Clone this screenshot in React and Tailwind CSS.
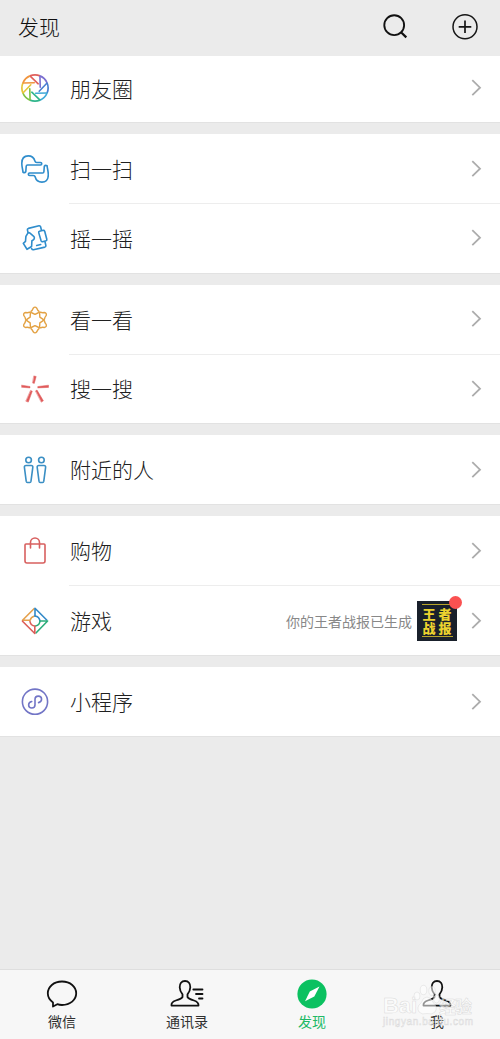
import React from 'react';

const Icon = ({ children, color = 'none' }) => (
  <svg viewBox="0 0 28 28" className="h-7 w-7 shrink-0" fill="none" stroke={color} strokeWidth="1.6" strokeLinejoin="round" strokeLinecap="round">
    {children}
  </svg>
);

const bladeColors = ['#e0605c', '#7b6fd0', '#4a7fd0', '#3fa9d8', '#2fb58c', '#7cc242', '#e5c53a', '#f0953f'];

const Moments = () => (
  <Icon>
    {bladeColors.map((c, i) => (
      <g key={c} stroke={c} transform={`rotate(${i * 45} 14 14)`}>
        <path d="M9 1.9A13 13 0 0 1 19 1.9" strokeLinecap="butt" strokeWidth="1.7" />
        <path d="M9.2 2.2L17.2 9.8" strokeWidth="1.6" />
      </g>
    ))}
  </Icon>
);

const hand = 'M2 17.2C1.8 14.2 .8 12.2 .8 8.3C.8 3.4 3.5 .9 7.2 .9C11 .9 13.1 2.8 14 6.2Q14.2 7.5 15.8 7.5H19.5C21.2 7.5 21.2 10 19.5 10H6.5Q5.3 10 5.2 11.3L4.8 16.8Q3.8 18.2 2 17.2Z';
const Scan = () => (
  <Icon color="#2f8dcc">
    <path d={hand} />
    <path d={hand} transform="rotate(180 14.05 14)" />
  </Icon>
);

const Shake = () => (
  <Icon color="#2f8dcc">
    <path d="M7 8.6L6.4 5.8Q6.3 4.7 7.4 4.4L18 1.8Q19.3 1.6 19.6 2.8L20.4 6M24 17.8L24.9 21.6Q25 22.8 23.9 23.1L12.4 25.8Q11.2 25.9 10.6 24.6" />
    <path d="M18.5 7.2L22.3 6.3Q23.3 6.2 23.7 7.2L25.8 15.3Q26 16.4 25 16.8L21.6 17.7Q20.6 17.8 20.1 16.8L17.7 8.6Q17.5 7.5 18.5 7.2Z" />
    <path d="M7 8.8L4.9 12.4L4.5 17.4L2.3 19.4L6 25.3L10.6 22.5L10.9 16.8Q14.4 15.2 13 12.6L9 9.2Q7.8 8.2 7 8.8Z" />
    <path d="M15.7 21.5L19.7 20.5" />
  </Icon>
);

const Look = () => (
  <Icon color="#e3a244">
    {[0, 60, 120, 180, 240, 300].map((a) => (
      <path key={a} transform={`rotate(${a} 14 14)`} d="M10 5.4Q11.4 4.4 12.2 2.2Q14 0 15.8 2.2Q16.6 4.4 18 5.4Q18.3 6.7 16.8 7L14 8.4L11.2 7Q9.7 6.7 10 5.4Z" strokeWidth="1.4" />
    ))}
  </Icon>
);

const Search = () => (
  <Icon>
    <g fill="#e05c5c" stroke="#e05c5c" strokeWidth=".5">
      <path d="M13.1 1L15.2 1.5L13.3 8.4L11.8 8Z" />
      <path d="M.8 10.2L9 11.5V12.9L.8 12.3Z" />
      <path d="M17 11.5L27.5 10.2V12.4L17 12.9Z" />
      <path d="M9.8 15.6L11.3 16.2L7.3 27.1L5.1 26.3Z" />
      <path d="M14.7 15.8L16 15L22.4 25.8L20.5 27Z" />
    </g>
  </Icon>
);

const Nearby = () => (
  <Icon color="#3b8fc4">
    {[0, 12.8].map((x) => (
      <g key={x} transform={`translate(${x} 0)`}>
        <circle cx="7.6" cy="4" r="2.8" />
        <path d="M5 9.5H10.2Q12 9.5 11.8 11.3L10 25.2Q9.8 26.5 8.8 26.5H6.4Q5.4 26.5 5.2 25.2L3.4 11.3Q3.2 9.5 5 9.5Z" />
      </g>
    ))}
  </Icon>
);

const Shopping = () => (
  <Icon color="#d8605f">
    <path d="M5 7H23Q24 7 24 8V24Q24 26 22 26H6Q4 26 4 24V8Q4 7 5 7Z" />
    <path d="M9.5 11V5.5A4.5 4.5 0 0 1 18.5 5.5V11" />
  </Icon>
);

const Games = () => (
  <Icon>
    <path d="M13 1.7L1.5 13.2H9.2Q9.8 10.2 13 9.2" stroke="#e5a14d" />
    <path d="M14 9V1.3L25.7 13" stroke="#3289c8" />
    <path d="M14 9Q18.3 9.6 19 14" stroke="#3289c8" />
    <path d="M19 14H26.6L15.2 25.8M19 14Q18.5 18.4 14.5 19" stroke="#2bad79" />
    <path d="M1.5 14.2L13.8 26.5V19Q9.8 18.6 9 14.6" stroke="#dc5d59" />
  </Icon>
);

const Mini = () => (
  <Icon color="#7275c6">
    <circle cx="14" cy="13.7" r="12.6" />
    <path d="M10.7 13.5C6.5 14.3 6.7 20 10.8 20C13 20 14 18.4 14 16.7V11.5C14 9.5 15.3 8.1 17.3 8.1C21.5 8.1 21.7 13.6 17.6 14.6" strokeWidth="1.6" />
  </Icon>
);

const Chevron = () => (
  <svg viewBox="0 0 12 18" className="h-[18px] w-3 shrink-0" fill="none" stroke="#acacac" strokeWidth="1.8">
    <path d="M1.3 1.2L9 8.7L1.3 16.2" />
  </svg>
);

const Row = ({ icon, label, divided, children }) => (
  <div className={`flex items-center pl-[21px] ${divided ? 'h-[70px] shrink-0' : 'flex-1'}`}>
    {icon}
    <div className={`ml-5 flex h-full flex-1 items-center pr-[17px] ${divided ? 'border-b border-[#ededed]' : ''}`}>
      <span className="flex-1 pl-px text-[21px] leading-none text-[#202020]">{label}</span>
      {children}
      <Chevron />
    </div>
  </div>
);

const Group = ({ children, size = 'h-[70px]' }) => (
  <section className={`flex shrink-0 flex-col border-b border-[#e2e2e2] bg-white ${size}`}>{children}</section>
);

const Report = () => (
  <div className="mr-[14px] flex items-center">
    <span className="mr-[5px] text-[14px] font-normal leading-none text-[#888]">你的王者战报已生成</span>
    <div className="relative flex h-10 w-10 flex-col items-center justify-center bg-[#19202b] text-[13px] font-black leading-[14px] text-[#ecd32f]">
      <div className="flex h-[33px] w-[31px] flex-col items-center justify-center border-y border-[#b7a42b]">
        <span className="flex gap-[3px]"><b>王</b><b>者</b></span>
        <span className="flex gap-[3px]"><b>战</b><b>报</b></span>
      </div>
      <i className="absolute -right-[5px] -top-[5px] h-[13px] w-[13px] rounded-full bg-[#fa5151]" />
    </div>
  </div>
);

const Tab = ({ label, active, children }) => (
  <div className={`flex flex-1 flex-col items-center pt-[7px] text-[14px] font-normal ${active ? 'text-[#20b965]' : 'text-[#303030]'}`}>
    <svg viewBox="0 0 36 34" className="mr-px h-[34px] w-9" fill="none" stroke="#111" strokeWidth="1.8" strokeLinejoin="round" strokeLinecap="round">{children}</svg>
    <span className="mr-px mt-[2px] leading-[16px]">{label}</span>
  </div>
);

const person = 'M16 4C19.5 4 21.4 6.7 21.3 10.2C21.2 13.3 20 15.5 18.5 17.3V20Q19.3 21.7 25 23.5Q29.8 25 29.5 28.7H2.5Q2 25 6.8 23.5Q12.7 21.7 13.5 20V17.3C12 15.5 10.8 13.3 10.7 10.2C10.6 6.7 12.5 4 16 4Z';

const Watermark = () => (
  <div className="pointer-events-none absolute bottom-[9px] left-[383px] h-[58px] w-[96px]">
    <svg viewBox="0 0 96 58" className="h-full w-full overflow-visible" fontFamily="'Liberation Sans', 'Noto Sans CJK SC', sans-serif" fill="#fff" fillOpacity=".55" stroke="#d2d2d2" strokeWidth=".5" strokeOpacity=".8">
      <text x="0" y="41" fontSize="22" fontWeight="700" textLength="34">Bai</text>
      <ellipse cx="34" cy="24" rx="3" ry="4" />
      <ellipse cx="40.5" cy="18" rx="3.3" ry="4.7" />
      <ellipse cx="49" cy="19" rx="3.2" ry="4.4" />
      <ellipse cx="53.5" cy="27" rx="3" ry="4" />
      <path d="M44 25Q48 25 50.5 31Q55 35 52 40Q49 43 44 41.5Q39 43 36 40Q33 35 38 31Q40 25 44 25Z" />
      <text x="56" y="41" fontSize="17" fontWeight="700" textLength="33">经验</text>
      <text x="0" y="53" fontSize="10" fontWeight="400" textLength="90">jingyan.baidu.com</text>
    </svg>
  </div>
);

export default function App() {
  return (
    <div lang="zh-CN" className="relative flex h-[1039px] w-[500px] flex-col overflow-hidden bg-[#ebebeb] font-['Noto_Sans_CJK_SC','Liberation_Sans',sans-serif] font-light">
      <header className="flex h-14 shrink-0 items-center pb-[3px] pl-[18px] pr-[21px]">
        <h1 className="flex-1 text-[21px] leading-none text-[#101010]">发现</h1>
        <svg viewBox="0 0 28 28" className="mr-[42px] h-7 w-7" fill="none" stroke="#111" strokeWidth="1.9">
          <circle cx="13.2" cy="12.2" r="9.9" /><path d="M20 19.2L25.3 24.4" strokeWidth="2.2" />
        </svg>
        <svg viewBox="0 0 28 28" className="h-7 w-7" fill="none" stroke="#161616" strokeWidth="1.5">
          <circle cx="14" cy="13.8" r="12" /><path d="M7.7 13.8H20.3M14 7.5V20.1" strokeWidth="1.7" />
        </svg>
      </header>
      <main className="flex flex-1 flex-col gap-[11px]">
        <Group size="h-[67px] pb-[2px]"><Row icon={<Moments />} label="朋友圈" /></Group>
        <Group size="h-[139.5px]">
          <Row icon={<Scan />} label="扫一扫" divided />
          <Row icon={<Shake />} label="摇一摇" />
        </Group>
        <Group size="h-[139.5px]">
          <Row icon={<Look />} label="看一看" divided />
          <Row icon={<Search />} label="搜一搜" />
        </Group>
        <Group><Row icon={<Nearby />} label="附近的人" /></Group>
        <Group size="h-[140px]">
          <Row icon={<Shopping />} label="购物" divided />
          <Row icon={<Games />} label="游戏"><Report /></Row>
        </Group>
        <Group><Row icon={<Mini />} label="小程序" /></Group>
      </main>
      <nav className="flex h-[70px] shrink-0 border-t border-[#dedede] bg-[#f7f7f7]">
        <Tab label="微信">
          <path d="M18 4.5C26.3 4.5 32.2 9.8 32.2 16.3C32.2 23 26.2 28 18 28Q15.5 28 13.3 27.2L9 29.5L9 25.4C5.8 23.2 3.8 20 3.8 16.3C3.8 9.8 9.8 4.5 18 4.5Z" />
        </Tab>
        <Tab label="通讯录">
          <path d={person} />
          <path d="M24.3 12.5H33.5M27 17H33.5M30 21.5H33.5" />
        </Tab>
        <Tab label="发现" active>
          <circle cx="18" cy="17" r="14.6" fill="#0bc160" stroke="none" />
          <path d="M25.5 9.5L20.3 19.6L11 24.3L15.8 14.5Z" fill="#fff" stroke="none" />
        </Tab>
        <Tab label="我"><path d={person} transform="translate(2 0)" /></Tab>
      </nav>
      <Watermark />
    </div>
  );
}
